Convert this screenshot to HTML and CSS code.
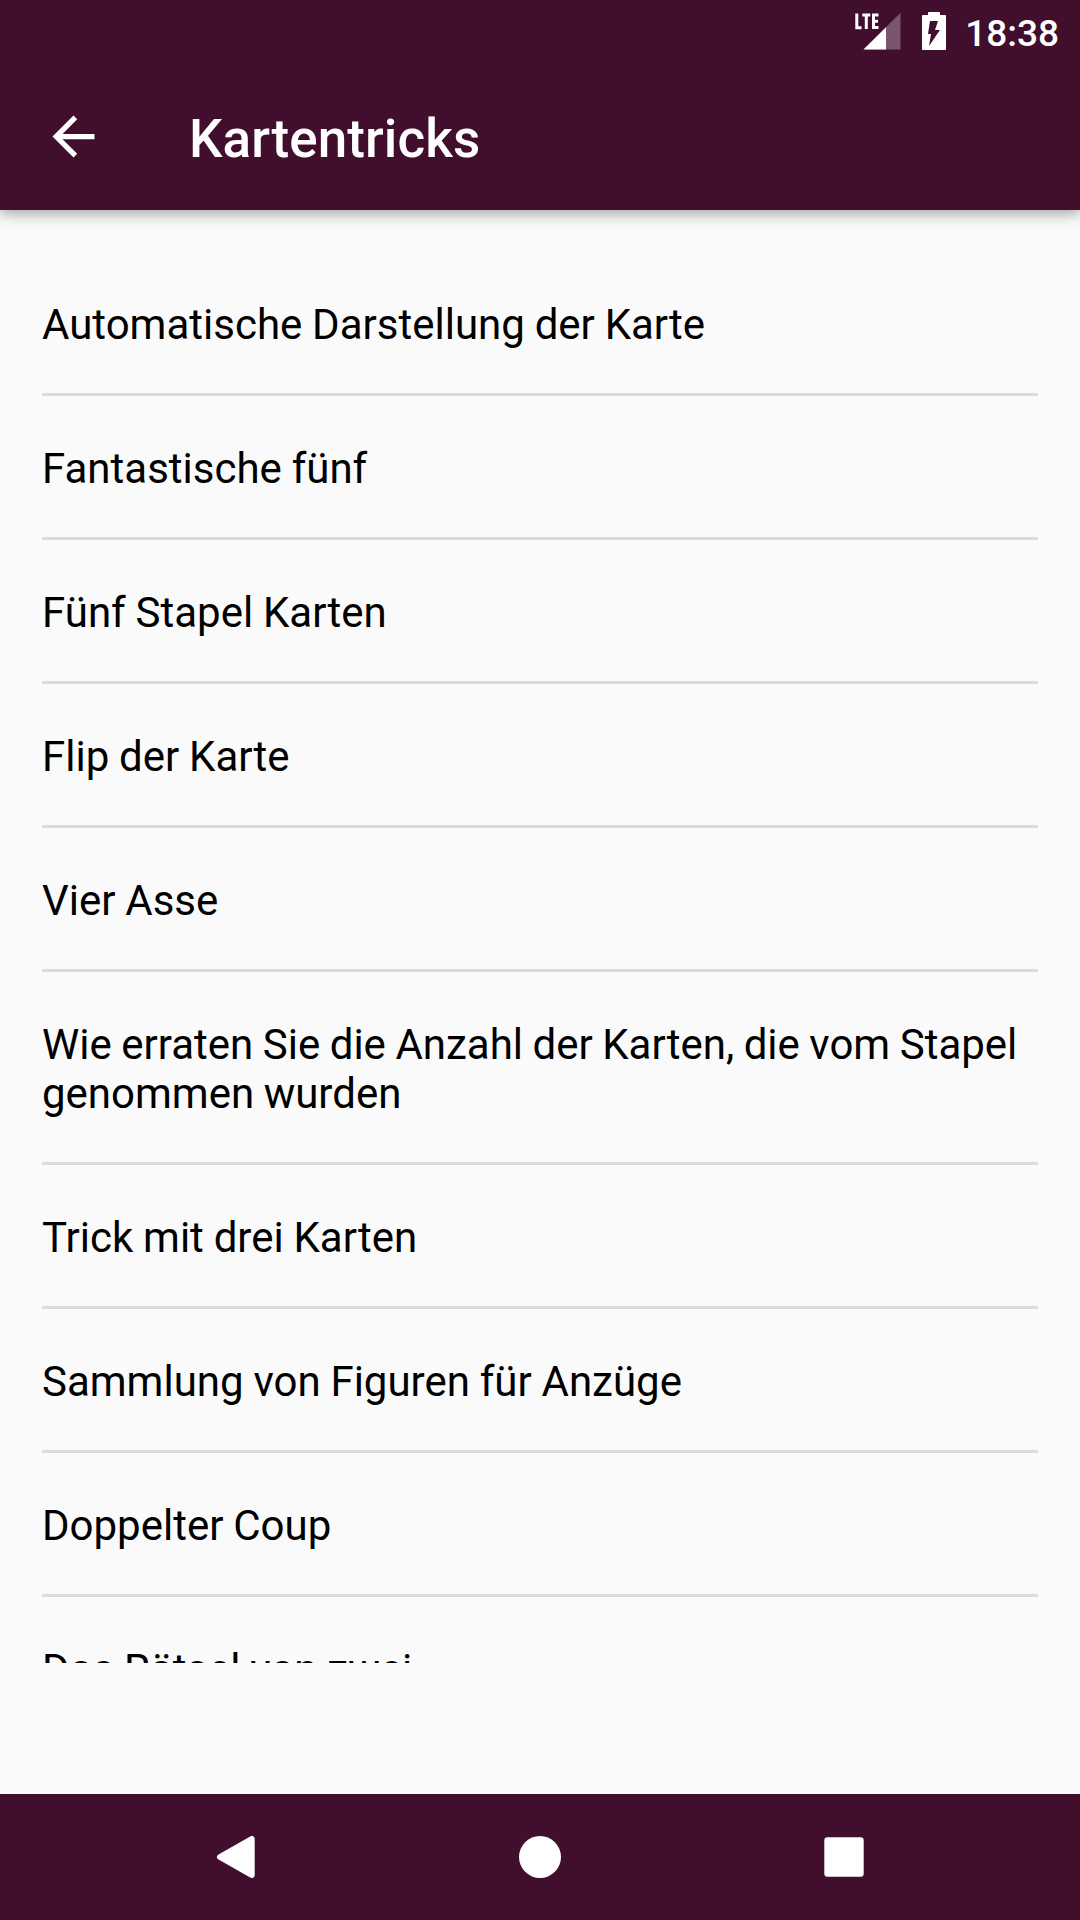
FILE: index.html
```html
<!DOCTYPE html>
<html lang="de">
  <head>
    <meta charset="utf-8">
    <meta name="viewport" content="width=device-width, initial-scale=1">
    <title>Kartentricks</title>
    <link rel="stylesheet" href="styles.css">
  </head>
  <body>
    <header class="header">
      <div class="status-bar">
        <svg class="signal" width="47" height="38" viewBox="0 0 47 38">
          <path d="M46.500 .8v36.700H9.500z" fill="#fff" fill-opacity=".3"/>
          <path d="M32 15.300v22.200H9.500z" fill="#fff"/>
          <path d="M2.800 1.500v14.300h4.700M8.300 3h8M12.300 3v14M24.500 3h-5v12.500h5M19.500 9.200h4.500" fill="none" stroke="#fff" stroke-width="3"/>
        </svg>
        <svg class="battery" width="24" height="38" viewBox="0 0 24 38">
          <path d="M7 0h10q1 0 1 1v2h5q1 0 1 1v33q0 1-1 1H1q-1 0-1-1V4q0-1 1-1h5V1q0-1 1-1z" fill="#fff"/>
          <path d="M8 9h8l-3 9h5L7 34l2-12H6z" fill="#410e2d"/>
        </svg>
        <span class="clock">18:38</span>
      </div>
      <div class="toolbar">
        <svg class="back" width="63" height="63" viewBox="0 0 24 24">
          <path d="M20 11H7.830l5.590-5.590L12 4l-8 8 8 8 1.410-1.410L7.830 13H20v-2z" fill="#fff"/>
        </svg>
        <h1 class="title">Kartentricks</h1>
      </div>
    </header>
    <main class="content">
      <ul class="list">
        <li>Automatische Darstellung der Karte</li>
        <li>Fantastische fünf</li>
        <li>Fünf Stapel Karten</li>
        <li>Flip der Karte</li>
        <li>Vier Asse</li>
        <li class="long">Wie erraten Sie die Anzahl der Karten, die vom Stapel genommen wurden</li>
        <li>Trick mit drei Karten</li>
        <li>Sammlung von Figuren für Anzüge</li>
        <li>Doppelter Coup</li>
        <li>Das Rätsel von zwei</li>
      </ul>
    </main>
    <nav class="nav-bar">
      <svg width="44" height="44" viewBox="0 0 44 44"><path d="M37.700 4v36L6 22z" fill="#fff" stroke="#fff" stroke-width="6" stroke-linejoin="round"/></svg>
      <svg width="44" height="44" viewBox="0 0 44 44"><circle cx="22" cy="22" r="21" fill="#fff"/></svg>
      <svg width="44" height="44" viewBox="0 0 44 44"><rect x="2.300" y="2.300" width="39.400" height="39.400" rx="3" fill="#fff"/></svg>
    </nav>
  </body>
</html>
```
FILE: styles.css
```css
* {
  box-sizing: border-box;
}

body {
  display: flex;
  flex-direction: column;
  height: 1920px;
  margin: 0;
  overflow: hidden;
  background-color: #fafafa;
  color: #000;
  font-family: Roboto, sans-serif;
}

.header {
  height: 210px;
  background-color: #410e2d;
  color: #fff;
  box-shadow: 0 3px 14px rgba(0, 0, 0, 0.38);
}

.status-bar {
  display: flex;
  justify-content: flex-end;
  height: 63px;
  padding: 12px 21px 0 0;
}

.battery {
  margin: 0 19px 0 21px;
}

.clock {
  width: 94px;
  font-size: 37px;
  font-weight: 500;
  line-height: 44px;
  text-align: right;
}

.toolbar {
  display: flex;
  align-items: center;
  height: 147px;
  padding-left: 42px;
}

.title {
  margin: 4px 0 0 84px;
  font-size: 53px;
  font-weight: 500;
  letter-spacing: 0.1px;
}

.content {
  height: 1453px;
  padding: 42px 42px 0;
  overflow: hidden;
}

.list {
  margin: 0;
  padding: 0;
  list-style: none;
}

.list li {
  padding: 48px 0 44px;
  border-bottom: 3px solid #dadada;
  font-size: 42px;
  line-height: 49px;
  word-spacing: -0.6px;
}

.list .long {
  word-spacing: -0.9px;
}

.nav-bar {
  display: flex;
  align-items: center;
  justify-content: space-between;
  height: 126px;
  margin-top: auto;
  padding: 0 214px;
  background-color: #410e2d;
}
```
